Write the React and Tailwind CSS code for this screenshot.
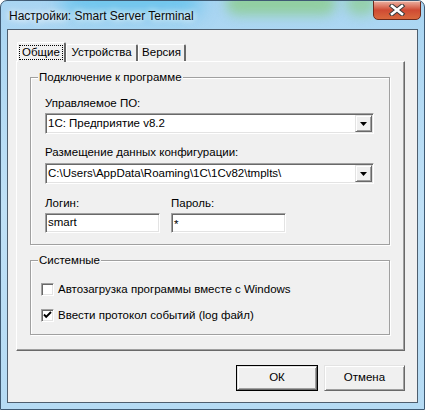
import React from 'react'

const sunken = 'border border-t-[#a0a0a0] border-l-[#a0a0a0] border-b-white border-r-white shadow-[inset_1px_1px_0_#696969,inset_-1px_-1px_0_#e3e3e3]'
const raised = 'border border-t-[#e3e3e3] border-l-[#e3e3e3] border-b-[#696969] border-r-[#696969] shadow-[inset_1px_1px_0_#fff,inset_-1px_-1px_0_#a0a0a0]'
const etched = 'border border-[#a0a0a0] shadow-[inset_1px_1px_0_#fff,1px_1px_0_#fff]'

function Combo({ value }) {
  return (
    <div className={`w-[329px] h-[21px] bg-white flex items-center ${sunken}`}>
      <span className="flex-1 pl-[2px] leading-[13px] whitespace-nowrap overflow-hidden">{value}</span>
      <div className={`w-[17px] h-[17px] mr-[1px] bg-[#f0f0f0] flex items-center justify-center ${raised}`}>
        <svg width="7" height="4" viewBox="0 0 7 4"><path d="M0 0h7L3.5 4z" fill="#000" /></svg>
      </div>
    </div>
  )
}

function Group({ title, className, children }) {
  return (
    <div className={`relative w-[360px] ${etched} ${className}`}>
      <span className="absolute top-[-7px] left-[7px] px-[1px] bg-[#f0f0f0] leading-[13px]">{title}</span>
      {children}
    </div>
  )
}

function Check({ checked, label }) {
  return (
    <div className="flex items-center h-[13px]">
      <div className={`w-[13px] h-[13px] bg-white flex items-center justify-center ${sunken}`}>
        {checked && (
          <svg width="9" height="9" viewBox="0 0 9 9"><path d="M1 3.5l2.2 2.3L8 1" stroke="#000" strokeWidth="1.9" fill="none" /></svg>
        )}
      </div>
      <span className="ml-[4px] leading-[13px]">{label}</span>
    </div>
  )
}

function Button({ children, main }) {
  return (
    <div className={`h-[26px] flex ${main ? 'w-[82px] border border-black' : 'w-[81px]'}`}>
      <div className={`flex-1 bg-[#f0f0f0] flex items-center justify-center ${raised}`}>{children}</div>
    </div>
  )
}

export default function App() {
  return (
    <div className="relative w-[425px] h-[410px] overflow-hidden rounded-t-[7px] border border-[#3f5a73] bg-gradient-to-b from-[#a9d5f2] via-[#bfe0f6] to-[#b5dbf4] text-[11.5px] text-black" style={{ fontFamily: '"Liberation Sans", Arial, sans-serif' }}>
      {/* glass blur behind caption */}
      <div className="absolute top-[-14px] left-[60px] w-[140px] h-[30px] rounded-full bg-[#5ec1ec] blur-[10px] opacity-80" />
      <div className="absolute top-[-10px] left-[225px] w-[110px] h-[24px] rounded-full bg-[#8ccd8c] blur-[6px] opacity-80" />
      <div className="absolute top-[-10px] left-[345px] w-[30px] h-[24px] rounded-full bg-[#8ccd8c] blur-[6px] opacity-70" />

      <div className="relative h-[28px] flex items-center pl-[8px] pt-[2px]">
        <span className="text-[12px] leading-[14px] text-[#0b0b0b] [text-shadow:0_0_6px_#fff,0_0_8px_#fff]">Настройки: Smart Server Terminal</span>
        <div className="absolute top-[-1px] right-[3px] w-[48px] h-[20px] rounded-b-[5px] border border-[#6e2a1c] bg-gradient-to-b from-[#eab1a3] via-[#cf4a33] to-[#d9683d] flex items-center justify-center shadow-[inset_0_1px_0_#f5d3c9]">
          <svg width="18" height="12" viewBox="0 0 18 12">
            <path d="M4 2l10 8M14 2L4 10" stroke="#3b3b3b" strokeWidth="4.6" strokeLinecap="square" />
            <path d="M4 2l10 8M14 2L4 10" stroke="#fff" strokeWidth="2.6" strokeLinecap="square" />
          </svg>
        </div>
      </div>

      <div className="relative ml-[6px] w-[411px] h-[374px] border border-[#4e5e6e] bg-[#f0f0f0] pl-[8px] pt-[12px]">
        {/* tabs */}
        <div className="relative z-10 flex items-start h-[19px] pl-[1px]">
          <div className="h-[20px] w-[49px] bg-[#f0f0f0] border-t border-l border-white border-r-2 border-r-[#696969] rounded-t-[2px] flex items-start justify-center pt-[2px]">
            <span className="border border-dotted border-black px-[2px] leading-[13px]">Общие</span>
          </div>
          <div className="mt-[2px] h-[17px] w-[72px] border-t border-l border-white border-r-2 border-r-[#696969] rounded-t-[2px] flex items-center justify-center">Устройства</div>
          <div className="mt-[2px] h-[17px] w-[48px] border-t border-l border-white border-r-2 border-r-[#696969] rounded-t-[2px] flex items-center justify-center">Версия</div>
        </div>

        {/* tab page */}
        <div className="w-[389px] h-[290px] border border-t-white border-l-white border-b-[#696969] border-r-[#696969] shadow-[inset_-1px_-1px_0_#a0a0a0] pl-[13px] pt-[15px]">
          <Group title="Подключение к программе" className="h-[168px] pl-[14px] pt-[19px]">
            <div className="leading-[13px]">Управляемое ПО:</div>
            <div className="mt-[3px]"><Combo value="1С: Предприятие v8.2" /></div>
            <div className="mt-[12px] leading-[13px]">Размещение данных конфигурации:</div>
            <div className="mt-[4px]"><Combo value="C:\Users\AppData\Roaming\1C\1Cv82\tmplts\" /></div>
            <div className="mt-[13px] flex gap-[11px]">
              <div className="w-[115px]">
                <div className="leading-[13px]">Логин:</div>
                <div className={`mt-[3px] h-[20px] bg-white flex items-center pl-[2px] ${sunken}`}>smart</div>
              </div>
              <div className="w-[115px]">
                <div className="leading-[13px]">Пароль:</div>
                <div className={`mt-[3px] h-[20px] bg-white flex items-start pt-[2px] pl-[2px] ${sunken}`}>*</div>
              </div>
            </div>
          </Group>

          <Group title="Системные" className="mt-[15px] h-[75px] pl-[10px] pt-[22px] flex flex-col gap-[13px]">
            <Check label="Автозагрузка программы вместе с Windows" />
            <Check checked label="Ввести протокол событий (log файл)" />
          </Group>
        </div>

        <div className="w-[389px] mt-[14px] flex justify-end gap-[6px]">
          <Button main>ОК</Button>
          <Button>Отмена</Button>
        </div>
      </div>
    </div>
  )
}
